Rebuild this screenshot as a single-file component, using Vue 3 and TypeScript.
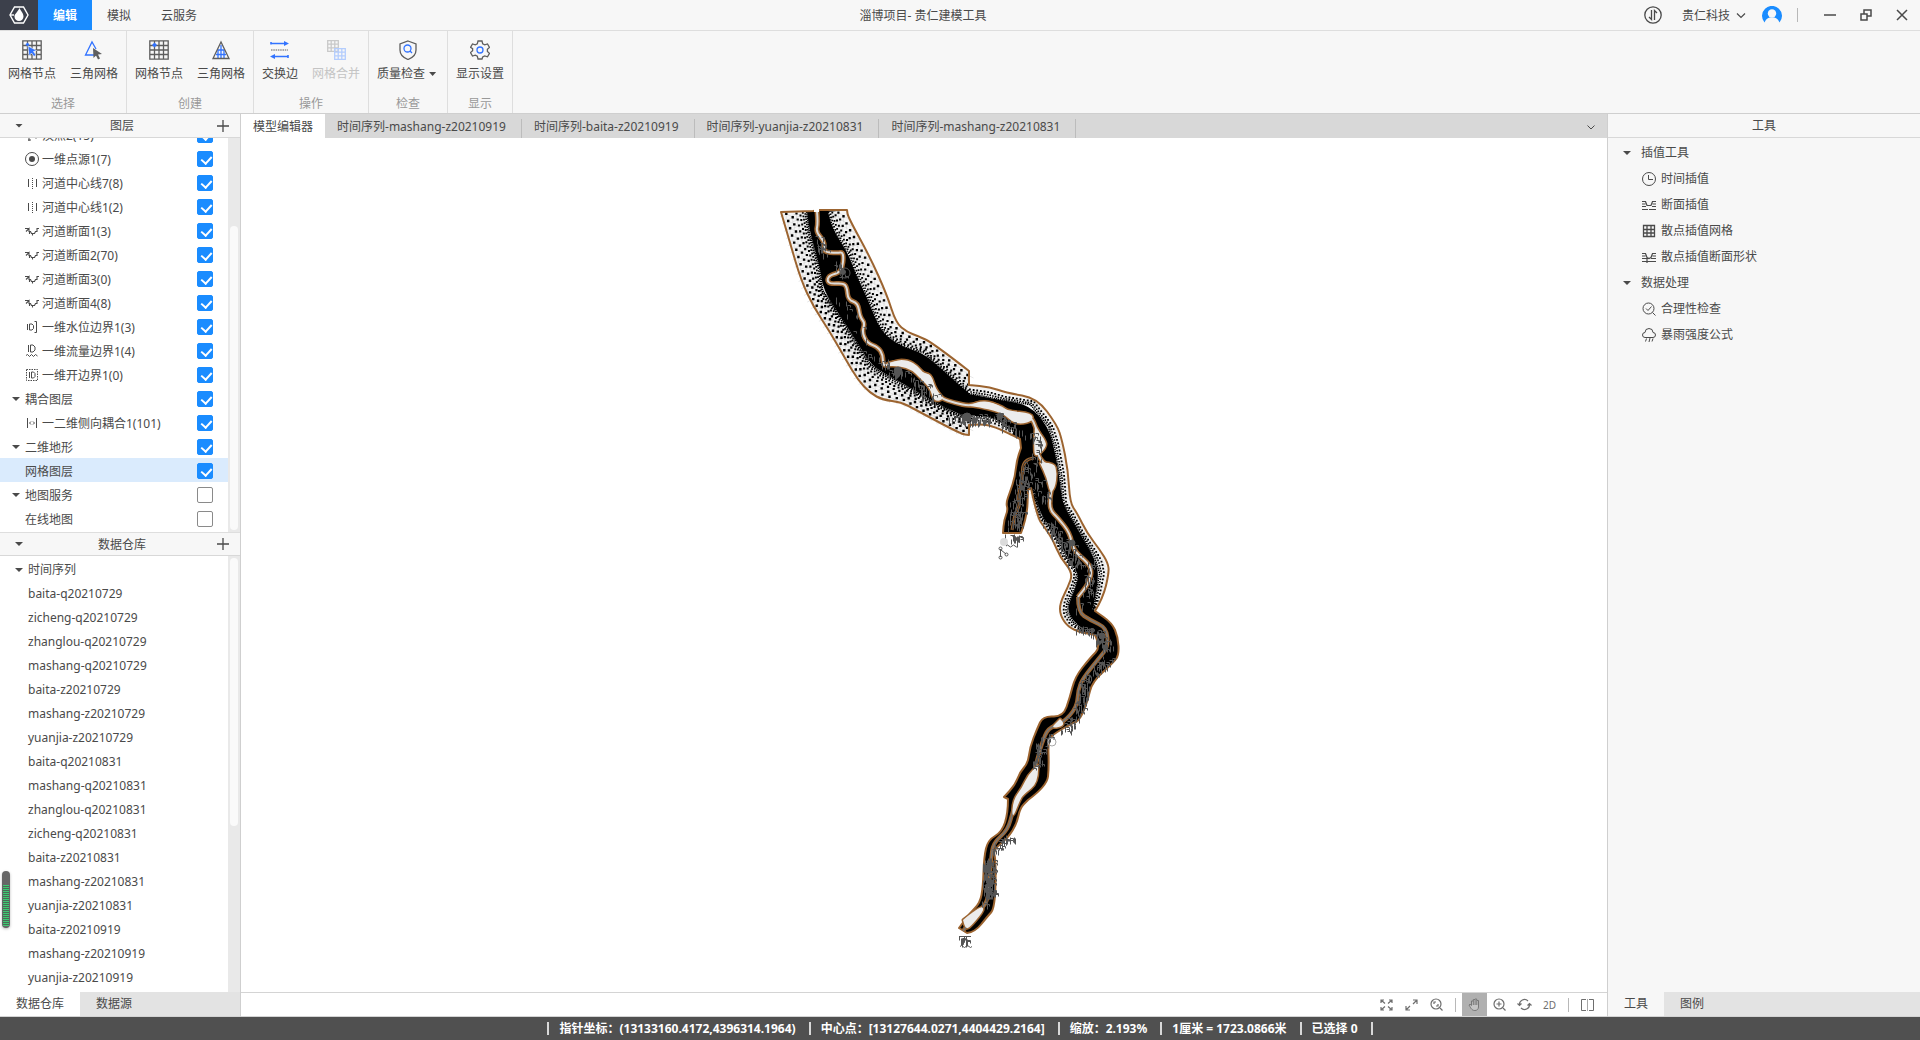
<script setup lang="ts">
import { ref } from 'vue'

type Pt = [number, number]

interface LayerRow {
  name: string
  icon?: string
  group?: boolean
  plain?: boolean
  on: boolean
}

const icons: Record<string, string> = {
  junction: '<path d="M4 1v12M4 7l6 1M3 12h3" /><circle cx="11" cy="8" r="2"/>',
  source: '<circle cx="7" cy="7" r="6.5"/><circle cx="7" cy="7" r="3" fill="currentColor" stroke="none"/>',
  center: '<path d="M3.500 3v8M11.500 3v8"/><path d="M7.500 2v11" stroke-dasharray="1 1"/>',
  section: '<path d="M0 4.500h4M1 7.500l3-3v3h1.500l1 2h3l1-2H12v-3h2M7.500 9.500v2M4.500 8v2" stroke-width="1.100"/>',
  stage: '<path d="M2.500 4v6M4.500 4v6h2.500l1.500-1.500v-3L7 4zM9.500 1.500h2v11h-2"/>',
  flow: '<path d="M3.500 1v7M5.500 1v7H8l2-2V3L8 1z"/><path d="M1 11.500l1.500-1 2 2 2-2 2 2 2-2 2 1.500"/>',
  open: '<rect x="1.500" y="1.500" width="11" height="11" stroke-dasharray="1.500 1"/><path d="M4.500 4v6M6.500 4v6h2l1.500-1.500v-3L8.500 4z"/>',
  couple: '<path d="M2.500 2v10M11.500 2v10M6 5.500L4.500 7 6 8.500M8 5.500L9.500 7 8 8.500"/>',
  clock: '<circle cx="7" cy="7" r="6.500"/><path d="M6.500 3v4.500H11"/>',
  profile: '<path d="M0 3.500h3.500l1.500 4h4l1.500-4H14M0 6h3.500M0 8.500h4M10 8.500h4M10.500 6H14M0 11.500h6M7 11.500h7" stroke-width="1.200"/>',
  grid: '<path d="M1.500 1.500h11v11h-11zM1.500 5.500h11M1.500 9h11M5 1.500v11M9 1.500v11" stroke-width="1.300"/>',
  shape: '<path d="M0 3.500h3.500l1.500 4 2 1 2-1 1.500-4H14M0 6h3.500M0 8.500h5M9 8.500h5M10.500 6H14M0 11.500h14M5 8v5" stroke-width="1.200"/>',
  audit: '<circle cx="6.500" cy="6.500" r="5.500"/><path d="M4 6.500l2 2 3.500-4M10.500 10.500L13.500 13.500"/>',
  rain: '<path d="M3 9.500a2.500 2.500 0 0 1 0-5 4 4 0 0 1 8 0 2.500 2.500 0 0 1 0 5zM4.500 10.500l-1 3M8 10l-1 4M11 10.500l-1 3"/>',
}

const lattice = 'M.8.8h18.400v18.400H.8zM.8 5.500h18.400M.8 10h18.400M.8 14.500h18.400M5.500.8v18.400M10 .8v18.400M14.500.8v18.400'
const ribbonIcons: Record<string, string> = {
  pickNode: `<path d="${lattice}"/><path d="M5.500 2.500l2 2-2 2-2-2z" fill="#3273ff" stroke="none"/><path d="M6 6l8.500 4.500-3 1 2.500 3.500-2 1.500-2.500-3.500L7 16z" fill="#3273ff" stroke="#f7f7f7" stroke-width=".6"/>`,
  pickTri: '<path d="M14 15H1.500L8 2l4 7" stroke="#3273ff"/><path d="M9 8l9 6-4 .5 2 4-2 1-2-4-2.500 2.500z" fill="#5e5e5e" stroke="none"/>',
  addNode: `<path d="${lattice}"/><path d="M5.500 2.500l2.500 2.500-2.500 2.500L3 5z" fill="#3273ff" stroke="none"/>`,
  addTri: '<path d="M10 5v13M7 10v8M13 10v8M7 10h6M5 14.500h10" stroke="#3273ff" stroke-width="1.300"/><path d="M10 2L2 18.500h16z"/>',
  swap: '<path d="M1 3.500h15M3 16.500h15M1 4.500V2M18 15v3" stroke="#3273ff" stroke-width="1.600"/><path d="M14 1l5 2.500L14 6zM5 14l-5 2.500L5 19z" fill="#3273ff" stroke="none"/><path d="M1 10h17" stroke-dasharray="1.500 .8" stroke-width="1.200"/>',
  merge: '<g stroke="#c9c9c9"><path d="M1.700.7h10.600v10.600H1.700zM1.700 4.200h10.600M1.700 7.800h10.600M5.200.7v10.600M8.800.7v10.600"/></g><g stroke="#b4cdfd"><path d="M8.700 8.700h10.600v10.600H8.700zM8.700 12.200h10.600M8.700 15.800h10.600M12.200 8.700v10.600M15.800 8.700v10.600" /></g>',
  quality: '<path d="M10 1l8 3v6c0 5-4 8-8 9.500C6 18 2 15 2 10V4z"/><circle cx="9.500" cy="8.500" r="3.500" stroke="#3273ff"/><path d="M12 11l2 2" stroke="#3273ff"/>',
  settings: '<path d="M8 1h4l.7 2.800 2 1 2.800-.8 2 3.400-2.100 2v2l2.100 2-2 3.400-2.800-.8-2 1L12 19H8l-.7-2.800-2-1-2.800.8-2-3.400 2.100-2v-2L.5 7.400l2-3.400 2.800.8 2-1z"/><circle cx="10" cy="10" r="3" stroke="#3273ff"/>',
}

const ribbon = [
  { title: '选择', tools: [{ label: '网格节点', icon: 'pickNode' }, { label: '三角网格', icon: 'pickTri' }] },
  { title: '创建', tools: [{ label: '网格节点', icon: 'addNode' }, { label: '三角网格', icon: 'addTri' }] },
  { title: '操作', tools: [{ label: '交换边', icon: 'swap' }, { label: '网格合并', icon: 'merge', disabled: true }] },
  { title: '检查', tools: [{ label: '质量检查', icon: 'quality', menu: true }] },
  { title: '显示', tools: [{ label: '显示设置', icon: 'settings' }] },
] as { title: string; tools: { label: string; icon: string; disabled?: boolean; menu?: boolean }[] }[]

const layers = ref<LayerRow[]>([
  { name: '汊点2(15)', icon: 'junction', on: true },
  { name: '一维点源1(7)', icon: 'source', on: true },
  { name: '河道中心线7(8)', icon: 'center', on: true },
  { name: '河道中心线1(2)', icon: 'center', on: true },
  { name: '河道断面1(3)', icon: 'section', on: true },
  { name: '河道断面2(70)', icon: 'section', on: true },
  { name: '河道断面3(0)', icon: 'section', on: true },
  { name: '河道断面4(8)', icon: 'section', on: true },
  { name: '一维水位边界1(3)', icon: 'stage', on: true },
  { name: '一维流量边界1(4)', icon: 'flow', on: true },
  { name: '一维开边界1(0)', icon: 'open', on: true },
  { name: '耦合图层', group: true, on: true },
  { name: '一二维侧向耦合1(101)', icon: 'couple', on: true },
  { name: '二维地形', group: true, on: true },
  { name: '网格图层', plain: true, on: true },
  { name: '地图服务', group: true, on: false },
  { name: '在线地图', plain: true, on: false },
])
const selectedLayer = ref('网格图层')

const series = [
  'baita-q20210729', 'zicheng-q20210729', 'zhanglou-q20210729', 'mashang-q20210729', 'baita-z20210729',
  'mashang-z20210729', 'yuanjia-z20210729', 'baita-q20210831', 'mashang-q20210831', 'zhanglou-q20210831',
  'zicheng-q20210831', 'baita-z20210831', 'mashang-z20210831', 'yuanjia-z20210831', 'baita-z20210919',
  'mashang-z20210919', 'yuanjia-z20210919',
]

const docs = [
  '模型编辑器', '时间序列-mashang-z20210919', '时间序列-baita-z20210919',
  '时间序列-yuanjia-z20210831', '时间序列-mashang-z20210831',
]
const activeDoc = ref(0)

const toolTree = [
  { title: '插值工具', items: [['clock', '时间插值'], ['profile', '断面插值'], ['grid', '散点插值网格'], ['shape', '散点插值断面形状']] },
  { title: '数据处理', items: [['audit', '合理性检查'], ['rain', '暴雨强度公式']] },
]

const status = [
  '指针坐标：(13133160.4172,4396314.1964)',
  '中心点：[13127644.0271,4404429.2164]',
  '缩放：2.193%',
  '1厘米 = 1723.0866米',
  '已选择 0',
]

/* ---- river mesh ---- */
const westBank: Pt[] = [[781, 212], [790, 243], [801, 280], [813, 306], [830, 332], [846, 360], [858, 380], [870, 393], [883, 400], [901, 402], [916, 410], [961, 434], [969, 435]]
const westMid: Pt[] = [[969, 425], [983, 424], [995, 427], [1012, 435], [1020, 439]]
const spur: Pt[] = [[1021, 448], [1017, 458], [1015, 477], [1010, 492], [1006, 503], [1008, 510], [1004, 520], [1003, 533]]
const spurEast: Pt[] = [[1021, 533], [1027, 517], [1028, 490]]
const westLow: Pt[] = [[1031, 488], [1037, 517], [1045, 528], [1053, 540], [1060, 557], [1073, 573], [1068, 587], [1060, 603], [1060, 615], [1068, 627], [1080, 632]]
const westTail: Pt[] = [[1095, 635], [1101, 647], [1090, 658], [1075, 677], [1070, 697], [1063, 717], [1043, 716], [1037, 729], [1030, 747], [1028, 763], [1020, 772], [1015, 785], [1004, 797]]
const westEnd: Pt[] = [[1008, 799], [1008, 813], [1002, 832], [988, 840], [984, 857], [983, 887], [980, 903], [970, 913], [959, 928]]
const eastEnd: Pt[] = [[967, 933], [975, 932], [987, 917], [995, 908], [996, 860], [993, 850], [1008, 838], [1017, 823], [1020, 808], [1028, 800]]
const eastTail: Pt[] = [[1028, 800], [1047, 786], [1049, 767], [1048, 740], [1055, 733], [1073, 723], [1080, 720], [1088, 700], [1092, 682], [1113, 663], [1119, 655], [1118, 637], [1112, 623], [1095, 611]]
const eastMid: Pt[] = [[969, 385], [990, 387], [1007, 393], [1037, 398], [1057, 425], [1062, 440], [1068, 470], [1070, 503], [1077, 513], [1087, 533], [1100, 550], [1108, 563], [1109, 573], [1103, 598], [1095, 611]]
const eastBank: Pt[] = [[847, 210], [848, 217], [870, 257], [887, 295], [896, 323], [907, 332], [918, 336], [933, 343], [969, 371]]

/* Rounds a polyline through the middles of its segments, keeping both ends. */
function curve(pts: Pt[]) {
  let d = `${pts[0][0]} ${pts[0][1]}`
  for (let i = 1; i < pts.length - 1; i++) {
    const mx = (pts[i][0] + pts[i + 1][0]) / 2
    const my = (pts[i][1] + pts[i + 1][1]) / 2
    d += `Q${pts[i][0]} ${pts[i][1]} ${mx} ${my}`
  }
  const end = pts[pts.length - 1]
  return `${d}L${end[0]} ${end[1]}`
}
const flip = (pts: Pt[]) => [...pts].reverse()
const outline =
  'M' +
  [westBank, westMid, spur, spurEast, westLow, westTail, westEnd, eastEnd, eastTail, flip(eastMid), flip(eastBank)]
    .map(curve)
    .join('L') +
  'L820 210L813 211Z'

const bands: { outer: Pt[]; inner: Pt[]; width: number }[] = [
  { outer: westBank, width: 28, inner: [[807, 212], [810, 233], [820, 267], [823, 290], [843, 320], [860, 347], [870, 363], [883, 373], [910, 387], [930, 400], [957, 413], [969, 418]] },
  { outer: eastBank, width: 22, inner: [[828, 212], [833, 230], [848, 253], [855, 273], [867, 297], [877, 323], [887, 337], [903, 347], [923, 353], [943, 370], [957, 383], [969, 393]] },
  { outer: eastMid, width: 9, inner: [[969, 394], [1000, 400], [1030, 405], [1048, 427], [1054, 447], [1060, 480], [1062, 503], [1078, 530], [1094, 557], [1099, 573], [1095, 598], [1093, 609]] },
  { outer: westLow, width: 8, inner: [[1032, 488], [1041, 515], [1050, 527], [1059, 540], [1066, 555], [1079, 573], [1076, 587], [1069, 603], [1068, 612], [1074, 622], [1082, 628]] },
  { outer: westMid.slice(0, 4), width: 8, inner: [[969, 416], [985, 416], [998, 420], [1014, 430]] },
]

function length(pts: Pt[]) {
  let sum = 0
  for (let i = 1; i < pts.length; i++) sum += Math.hypot(pts[i][0] - pts[i - 1][0], pts[i][1] - pts[i - 1][1])
  return sum
}
function along(pts: Pt[], f: number): Pt {
  let left = f * length(pts)
  for (let i = 1; i < pts.length; i++) {
    const [ax, ay] = pts[i - 1]
    const [bx, by] = pts[i]
    const d = Math.hypot(bx - ax, by - ay)
    if (left <= d) return [ax + ((bx - ax) * left) / d, ay + ((by - ay) * left) / d]
    left -= d
  }
  return pts[pts.length - 1]
}
const n1 = (v: number) => Math.round(v * 10) / 10

const zones: string[] = []
let mesh = ''
let dots = ''
for (const b of bands) {
  zones.push(`M${curve(b.outer)}L${curve(flip(b.inner))}Z`)
  const total = length(b.outer)
  let d = 0.5
  let step = 1.8
  let row = 0
  while (d < b.width - 2) {
    const count = Math.floor(total / (step * 1.25))
    const size = Math.min(1.4 + row * 0.2, 2.4)
    for (let i = 0; i < count; i++) {
      const f = (i + (row % 2 ? 0.75 : 0.25)) / count
      const p = along(b.inner, f)
      const q = along(b.outer, f)
      const t = d / b.width
      const x = p[0] + (q[0] - p[0]) * t
      const y = p[1] + (q[1] - p[1]) * t
      dots += `M${n1(x - size / 2)} ${n1(y - size / 2)}h${n1(size)}v${n1(size)}h-${n1(size)}z`
      if (step > 3) mesh += `M${n1(x)} ${n1(y)}l${n1(step)} ${n1(step / 2)}M${n1(x)} ${n1(y)}l-${n1(step)} ${n1(step / 2)}M${n1(x)} ${n1(y)}v${n1(step)}`
    }
    d += step
    step = Math.min(step * 1.3, 6)
    row++
  }
}

const channel: Pt[] = [[817, 211], [818, 223], [816, 232], [825, 242], [823, 252], [837, 253], [844, 252], [842, 272], [830, 275], [827, 280], [830, 284], [843, 283], [847, 287], [848, 300], [858, 303], [860, 317], [865, 323], [862, 332], [867, 343], [878, 347], [883, 355], [883, 367], [892, 362], [910, 362], [920, 373], [930, 375], [933, 387], [940, 398], [955, 403], [970, 406], [983, 402], [1003, 407], [1013, 418], [1032, 417], [1035, 427], [1043, 440], [1037, 453], [1043, 463], [1052, 467], [1053, 483], [1050, 497], [1050, 510], [1058, 518], [1070, 533], [1073, 550], [1087, 562], [1092, 570], [1089, 583], [1078, 597], [1078, 612], [1090, 620], [1107, 628], [1108, 647], [1100, 657], [1083, 678], [1078, 690], [1077, 707], [1063, 723], [1048, 728], [1042, 743], [1037, 760], [1033, 777], [1020, 790], [1013, 810], [1008, 830], [993, 843], [991, 860], [989, 887], [987, 903], [977, 913], [963, 931]]
const narrowFrom = channel.findIndex((p) => p[0] === 1078 && p[1] === 597)
const upperChannel = 'M' + curve(channel.slice(0, narrowFrom + 1))
const lowerChannel = 'M' + curve(channel.slice(narrowFrom))
const spurChannel = 'M' + curve([[1034, 458], [1023, 459], [1022, 480], [1018, 497], [1020, 506], [1015, 513], [1012, 530]])
const poolPoints: Pt[][] = [
  [[885, 366], [895, 360], [908, 360], [918, 366], [924, 374], [931, 374], [936, 390], [945, 399], [934, 402], [930, 388], [920, 378], [912, 370], [900, 366], [885, 366]],
  [[970, 406], [977, 401], [993, 402], [1007, 411], [1032, 413], [1033, 421], [1021, 424], [1012, 422], [1003, 413], [983, 408], [970, 406]],
  [[1035, 427], [1046, 440], [1046, 448], [1035, 458], [1034, 446], [1035, 427]],
  [[1040, 463], [1054, 462], [1057, 473], [1055, 488], [1050, 493], [1047, 478], [1040, 463]],
  [[1038, 765], [1039, 782], [1023, 795], [1020, 800], [1012, 820], [1013, 800], [1022, 788], [1028, 775], [1038, 765]],
  [[1060, 719], [1067, 725], [1050, 729], [1060, 719]],
  [[963, 920], [980, 906], [985, 909], [973, 924], [966, 930], [963, 920]],
]
const pools = poolPoints.map((p) => `M${curve(p)}Z`)

/* section and coupling markers, scattered along the reaches that carry them */
let seed = 7
const rand = () => ((seed = (seed * 16807) % 2147483647) / 2147483647)
const clusters: { path: Pt[]; count: number; spread: number }[] = [
  { path: [[817, 238], [824, 252]], count: 24, spread: 5 },
  { path: [[835, 262], [845, 276]], count: 12, spread: 5 },
  { path: [[838, 296], [855, 318], [860, 338]], count: 14, spread: 6 },
  { path: [[870, 352], [884, 364]], count: 14, spread: 7 },
  { path: [[893, 370], [915, 378], [932, 400]], count: 60, spread: 8 },
  { path: [[955, 416], [970, 418], [1000, 416], [1018, 430]], count: 100, spread: 7 },
  { path: [[1018, 432], [1036, 436], [1036, 458]], count: 30, spread: 6 },
  { path: [[1030, 462], [1022, 480], [1017, 505], [1014, 526]], count: 130, spread: 7 },
  { path: [[1008, 534], [1018, 538]], count: 26, spread: 5 },
  { path: [[1038, 478], [1045, 500]], count: 25, spread: 6 },
  { path: [[1048, 522], [1064, 540], [1078, 565]], count: 90, spread: 7 },
  { path: [[1090, 560], [1088, 592], [1076, 612]], count: 40, spread: 5 },
  { path: [[1080, 628], [1098, 632], [1108, 648]], count: 70, spread: 6 },
  { path: [[1108, 658], [1086, 680], [1078, 710], [1064, 730]], count: 130, spread: 6 },
  { path: [[1050, 732], [1040, 745], [1037, 768]], count: 50, spread: 5 },
  { path: [[1012, 834], [994, 850]], count: 34, spread: 5 },
  { path: [[989, 860], [989, 896]], count: 180, spread: 6 },
  { path: [[984, 902], [988, 904]], count: 8, spread: 3 },
  { path: [[962, 937], [967, 941]], count: 18, spread: 4 },
]
let ticks = ''
for (const c of clusters) {
  for (let i = 0; i < c.count; i++) {
    const p = along(c.path, rand())
    const x = Math.round(p[0] + (rand() - 0.5) * 2 * c.spread) + 0.5
    const y = Math.round(p[1] + (rand() - 0.5) * c.spread) + 0.5
    ticks += rand() > 0.35 ? `M${x} ${y}v${Math.round(3 + rand() * 4)}` : `M${x} ${y}h3v2`
  }
}
</script>

<template>
  <div class="app">
    <header class="titlebar">
      <div class="logo">
        <svg width="20" height="18" viewBox="0 0 20 18" fill="none" stroke="#fff" stroke-width="1.4">
          <path d="M5.500 1h9L19 9l-4.500 8h-9L1 9z" />
          <path d="M1 9h4" />
          <path d="M10.500 2c1 3 4 5 4 8.500a4.500 4.500 0 0 1-9 0C5.500 8 8 7 10.500 2z" fill="#fff" stroke="none" />
        </svg>
      </div>
      <nav class="menu">
        <button class="on">编辑</button>
        <button>模拟</button>
        <button>云服务</button>
      </nav>
      <h1>淄博项目- 贵仁建模工具</h1>
      <div class="account">
        <button class="sync" aria-label="同步">
          <svg width="18" height="18" viewBox="0 0 18 18" fill="none" stroke="currentColor" stroke-width="1.3">
            <circle cx="9" cy="9" r="8.200" /><path d="M7.500 4v9.500L5 11M10.500 14V4.500L13 7" />
          </svg>
        </button>
        <button class="company">
          贵仁科技
          <svg width="10" height="6" viewBox="0 0 10 6" fill="none" stroke="currentColor" stroke-width="1.2"><path d="M1 .5l4 4 4-4" /></svg>
        </button>
        <svg class="avatar" width="20" height="18" viewBox="0 0 20 18">
          <path d="M2.500 16.500A10 10 0 1 1 17.500 16.500Q16 12.500 12.500 11.500h-5Q4 12.500 2.500 16.500z" fill="#1a8cff" />
          <circle cx="10" cy="7.500" r="4.200" fill="#f7f7f7" />
        </svg>
        <i class="rule"></i>
        <button class="win" aria-label="最小化"><svg width="12" height="12" viewBox="0 0 12 12" stroke="currentColor" stroke-width="1.500"><path d="M0 6h12" /></svg></button>
        <button class="win" aria-label="还原"><svg width="12" height="12" viewBox="0 0 12 12" fill="none" stroke="currentColor" stroke-width="1.500"><path d="M1 5h6v6H1zM4 5V1h7v6H7" /></svg></button>
        <button class="win" aria-label="关闭"><svg width="12" height="12" viewBox="0 0 12 12" stroke="currentColor" stroke-width="1.500"><path d="M1 1l10 10M11 1L1 11" /></svg></button>
      </div>
    </header>

    <section class="ribbon">
      <div v-for="g in ribbon" :key="g.title" class="group">
        <div class="tools">
          <button v-for="t in g.tools" :key="t.icon" :disabled="t.disabled">
            <svg width="20" height="20" viewBox="0 0 20 20" fill="none" stroke="#5e5e5e" stroke-width="1.3" v-html="ribbonIcons[t.icon]"></svg>
            <span>{{ t.label }}<i v-if="t.menu" class="caret"></i></span>
          </button>
        </div>
        <div class="caption">{{ g.title }}</div>
      </div>
    </section>

    <main class="work">
      <aside class="left">
        <div class="head"><i class="caret"></i><span>图层</span><button aria-label="添加图层">
          <svg width="12" height="12" viewBox="0 0 12 12" stroke="currentColor" stroke-width="1.3"><path d="M0 6h12M6 0v12" /></svg></button></div>
        <div class="pane layers">
          <ul>
            <li v-for="(l, i) in layers" :key="i" :class="{ group: l.group, plain: l.plain, sel: l.name === selectedLayer }" @click="selectedLayer = l.name">
              <i v-if="l.group" class="caret"></i>
              <svg v-if="l.icon" width="14" height="14" viewBox="0 0 14 14" fill="none" stroke="currentColor" v-html="icons[l.icon]"></svg>
              <label :for="'layer' + i">{{ l.name }}</label>
              <input :id="'layer' + i" v-model="l.on" type="checkbox" />
            </li>
          </ul>
          <div class="bar"><div class="thumb low"></div></div>
        </div>
        <div class="head mid"><i class="caret"></i><span>数据仓库</span><button aria-label="添加数据">
          <svg width="12" height="12" viewBox="0 0 12 12" stroke="currentColor" stroke-width="1.3"><path d="M0 6h12M6 0v12" /></svg></button></div>
        <div class="pane store">
          <ul>
            <li class="root"><i class="caret"></i><span>时间序列</span></li>
            <li v-for="s in series" :key="s">{{ s }}</li>
          </ul>
          <div class="bar"><div class="thumb high"></div></div>
        </div>
        <div class="tabs"><button class="on">数据仓库</button><button>数据源</button></div>
        <div class="meter"><i></i></div>
      </aside>

      <section class="center">
        <div class="docs">
          <button v-for="(d, i) in docs" :key="d" :class="{ on: activeDoc === i }" @click="activeDoc = i">{{ d }}</button>
          <svg width="8" height="5" viewBox="0 0 8 5" fill="none" stroke="currentColor"><path d="M.5.500L4 4 7.500.500" /></svg>
        </div>
        <div class="canvas">
          <svg viewBox="241 138 1366 854">
            <path :d="outline" fill="#000" />
            <path v-for="(z, i) in zones" :key="i" :d="z" fill="#f4f4f4" />
            <path :d="mesh" fill="none" stroke="#cfcfcf" stroke-width=".5" />
            <path :d="dots" fill="#000" />
            <path :d="outline" fill="none" stroke="#9c6430" stroke-width="2" stroke-linejoin="round" />
            <g fill="none" stroke="#9c6430" stroke-linejoin="round">
              <path :d="upperChannel" stroke-width="5" />
              <path :d="lowerChannel" stroke-width="4" />
              <path :d="spurChannel" stroke-width="3" />
              <path v-for="(p, i) in pools" :key="i" :d="p" stroke-width="3" />
            </g>
            <g fill="#ececec" stroke="#dcdcdc" stroke-linejoin="round">
              <path :d="upperChannel" fill="none" stroke-width="2" />
              <path :d="lowerChannel" fill="none" stroke="#777" stroke-width="1.5" />
              <path :d="spurChannel" fill="none" stroke="#333" stroke-width="1" />
              <path v-for="(p, i) in pools" :key="i" :d="p" stroke="none" />
            </g>
            <path d="M814 208h5v4h-5z" fill="#fff" />
            <path :d="ticks" fill="none" stroke="#555" />
            <g fill="none" stroke="#555">
              <circle cx="845" cy="273" r="5" />
              <circle cx="843" cy="272" r="2.500" fill="#555" />
              <circle cx="898" cy="371" r="4" fill="#555" />
              <circle cx="967" cy="417" r="4" fill="#555" />
              <circle cx="1000" cy="416" r="3" fill="#555" />
              <circle cx="1072" cy="543" r="3" fill="#555" />
              <circle cx="1102" cy="636" r="3" fill="#555" />
              <circle cx="1052" cy="742" r="4" stroke="#aaa" />
              <circle cx="1004" cy="542" r="4" fill="#ccc" stroke="none" opacity=".7" />
              <path d="M1006 546q1.500-2 3 0t3 0 3 0 3 0" />
              <path d="M1000.500 549v8M1001 550l5 4" />
              <circle cx="1000.500" cy="548.500" r="1.500" /><circle cx="1000.500" cy="557.500" r="1.500" /><circle cx="1006.500" cy="554.500" r="1.500" />
              <path d="M960 946.500q1.500-2 3 0t3 0 3 0 3 0M959 936.500h12" />
            </g>
          </svg>
        </div>
        <div class="viewbar">
          <button aria-label="全图"><svg width="13" height="12" viewBox="0 0 13 12" fill="none" stroke="currentColor" stroke-width="1.200"><path d="M1 4V1h3M9 1h3v3M12 8v3H9M4 11H1V8M1 1l4 3.500M12 1L8 4.500M1 11l4-3.500M12 11L8 7.500" /></svg></button>
          <button aria-label="缩放至选择"><svg width="13" height="12" viewBox="0 0 13 12" fill="none" stroke="currentColor" stroke-width="1.200"><path d="M8 1h4v4M12 1L8 5M5 11H1V7M1 11l4-4" /></svg></button>
          <button aria-label="框选放大"><svg width="13" height="13" viewBox="0 0 13 13" fill="none" stroke="currentColor" stroke-width="1.200"><circle cx="6" cy="6" r="5" /><path d="M4 6V4h2M8 6v2H6M10 10l2.500 2.500" /></svg></button>
          <i class="rule"></i>
          <button class="on" aria-label="平移"><svg width="13" height="13" viewBox="0 0 13 13" fill="#c4c4c4" stroke="#777"><path d="M3.500 7.500V3h1.800V1.500h1.800V1h1.600v1.500h1.800V9c0 2-1.500 3.500-3.500 3.500-2.500 0-3.500-1-6-5.500l1-.8zM5.300 3v4M7.100 2v5M8.800 2.500V7" /></svg></button>
          <button aria-label="放大"><svg width="13" height="13" viewBox="0 0 13 13" fill="none" stroke="currentColor" stroke-width="1.200"><circle cx="6" cy="6" r="5" /><path d="M6 3.500v5M3.500 6h5M10 10l2.500 2.500" /></svg></button>
          <button aria-label="刷新"><svg width="15" height="13" viewBox="0 0 15 13" fill="none" stroke="currentColor" stroke-width="1.200"><path d="M2.500 7A5 5 0 0 1 11 3M12.500 6A5 5 0 0 1 4 10M.5 5.500l2 2 2-2M10.500 7.500l2-2 2 2" /></svg></button>
          <button class="dim">2D</button>
          <i class="rule"></i>
          <button aria-label="分屏"><svg width="13" height="12" viewBox="0 0 13 12" fill="none" stroke="currentColor"><path d="M5 .5H.5v11H5M8 .5h4.500v11H8" /><path d="M6.500 0v12" stroke="#aaa" /></svg></button>
        </div>
      </section>

      <aside class="right">
        <div class="head"><span>工具</span></div>
        <div class="tree">
          <template v-for="g in toolTree" :key="g.title">
            <div class="node"><i class="caret"></i>{{ g.title }}</div>
            <button v-for="t in g.items" :key="t[1]" class="leaf">
              <svg width="14" height="14" viewBox="0 0 14 14" fill="none" stroke="currentColor" v-html="icons[t[0]]"></svg>{{ t[1] }}
            </button>
          </template>
        </div>
        <div class="tabs"><button class="on">工具</button><button>图例</button></div>
      </aside>
    </main>

    <footer class="status">
      <template v-for="s in status" :key="s"><i></i><span>{{ s }}</span></template><i></i>
    </footer>
  </div>
</template>

<style>
body {
  margin: 0;
}
</style>

<style scoped>
.app {
  display: flex;
  flex-direction: column;
  height: 100vh;
  background: #fff;
  color: #4a4a4a;
  font: 12px/24px "Noto Sans", "Noto Sans CJK SC", sans-serif;
}
.app * {
  box-sizing: border-box;
}
button {
  padding: 0;
  border: 0;
  background: none;
  color: inherit;
  font: inherit;
}
svg {
  display: block;
  flex: none;
}
ul {
  margin: 0;
  padding: 0;
  list-style: none;
}
.caret {
  flex: none;
  width: 8px;
  height: 4px;
  background: currentColor;
  clip-path: polygon(0 0, 100% 0, 50% 100%);
}
.rule {
  width: 1px;
  height: 14px;
  background: #b8b8b8;
}

.titlebar {
  display: flex;
  flex: none;
  height: 31px;
  border-bottom: 1px solid #dedede;
  background: #f7f7f7;
}
.logo {
  display: flex;
  align-items: center;
  justify-content: center;
  width: 38px;
  background: #3c404b;
}
.menu {
  display: flex;
}
.menu button {
  padding: 2px 15px 0;
}
.menu .on {
  background: #1a8cff;
  color: #fff;
  font-weight: 700;
}
h1 {
  flex: 1;
  margin: 0;
  padding: 1px 0 0 2px;
  font-size: 12px;
  font-weight: 400;
  line-height: 30px;
  text-align: center;
}
.account {
  display: flex;
  align-items: center;
  padding: 0 12px;
}
.company {
  display: flex;
  align-items: center;
  gap: 6px;
  margin: 0 16px 0 20px;
  padding-top: 2px;
}
.account .rule {
  margin: 0 26px 0 15px;
}
.win + .win {
  margin-left: 24px;
}

.ribbon {
  display: flex;
  flex: none;
  height: 83px;
  border-bottom: 1px solid #cfcfcf;
  background: #f7f7f7;
}
.group {
  display: flex;
  flex-direction: column;
}
.ribbon .group {
  padding: 9px 8px 0;
  border-right: 1px solid #dedede;
}
.tools {
  display: flex;
  gap: 14px;
}
.tools button {
  display: flex;
  flex-direction: column;
  align-items: center;
  gap: 2px;
}
.tools span {
  display: flex;
  align-items: center;
  gap: 4px;
}
.tools button:disabled {
  color: #c4c4c4;
}
.tools .caret {
  width: 7px;
  margin-right: 3px;
}
.caption {
  margin-top: 6px;
  color: #999;
  text-align: center;
}

.work {
  display: flex;
  flex: 1;
  min-height: 0;
}
.head {
  display: flex;
  flex: none;
  align-items: center;
  height: 24px;
  border-bottom: 1px solid #d8d8d8;
  background: #f7f7f7;
}
.head span {
  flex: 1;
  text-align: center;
}
.left {
  position: relative;
  display: flex;
  flex: none;
  flex-direction: column;
  width: 241px;
  border-right: 1px solid #cfcfcf;
}
.left .head {
  padding: 0 11px 0 15px;
}
.left .head span {
  padding: 1px 0 0 4px;
}
.left .mid {
  border-top: 1px solid #dedede;
}
.pane {
  display: flex;
  overflow: hidden;
}
.layers {
  flex: 394 1 0;
}
.store {
  flex: 436 1 0;
}
.pane ul {
  flex: 1;
}
.layers ul {
  margin-top: -16px;
}
.pane li {
  display: flex;
  align-items: center;
  height: 24px;
}
.layers li {
  padding: 2px 15px 0 25px;
}
.layers .group {
  flex-direction: row;
  padding-left: 12px;
}
.layers .group .caret {
  margin-right: 5px;
}
.layers svg {
  margin-right: 3px;
}
.sel {
  background: #daebfd;
}
.layers label {
  flex: 1;
  padding-top: 2px;
}
input {
  position: relative;
  width: 16px;
  height: 16px;
  margin: 0;
  border: 1px solid #8a8a8a;
  border-radius: 2px;
  background: #fff;
  appearance: none;
}
input:checked {
  border-color: #1a8cff;
  background: #1a8cff;
}
input:checked::after {
  position: absolute;
  top: 2px;
  left: 5px;
  width: 5px;
  height: 8px;
  border: solid #fff;
  border-width: 0 2px 2px 0;
  content: "";
  transform: rotate(42deg);
}
.store ul {
  padding-top: 2px;
}
.store li {
  padding-left: 28px;
}
.store .root {
  gap: 5px;
  padding-left: 15px;
}
.bar {
  display: flex;
  flex: none;
  flex-direction: column;
  width: 12px;
  padding: 2px;
  background: #e9e9e9;
}
.thumb {
  border-radius: 4px;
  background: #fafafa;
}
.low {
  height: 78%;
  margin-top: auto;
}
.high {
  height: 62%;
}
.tabs {
  display: flex;
  flex: none;
  height: 25px;
  border-bottom: 1px solid #d4d4d4;
  background: #e3e3e3;
}
.tabs button {
  padding: 0 16px;
}
.left .tabs .on {
  background: #fff;
}
.right .tabs .on {
  background: #f7f7f7;
}
.meter {
  position: absolute;
  bottom: 89px;
  left: 2px;
  width: 8px;
  height: 57px;
  padding: 14px 1px 2px;
  border-radius: 4px;
  background: #666;
  box-shadow: 0 1px 3px #bbb;
}
.meter i {
  display: block;
  height: 100%;
  background: repeating-linear-gradient(#3fc973 0 1px, #4a6a55 1px 2px);
}

.center {
  display: flex;
  flex: 1;
  flex-direction: column;
  min-width: 0;
}
.docs {
  display: flex;
  flex: none;
  align-items: center;
  height: 24px;
  background: #d8d8d8;
}
.docs button {
  position: relative;
  height: 24px;
  padding: 1px 16px 0 12px;
}
.docs button:not(.on)::after {
  position: absolute;
  right: 0;
  bottom: 0;
  width: 1px;
  height: 19px;
  background: #bcbcbc;
  content: "";
}
.docs .on {
  padding-right: 12px;
  background: #fff;
}
.docs svg {
  margin: 2px 12px 0 auto;
}
.canvas {
  flex: 1;
  min-height: 0;
}
.canvas svg {
  width: 100%;
  height: 100%;
}
.viewbar {
  display: flex;
  flex: none;
  align-items: center;
  justify-content: flex-end;
  height: 25px;
  padding-right: 7px;
  border-top: 1px solid #d4d4d4;
  border-bottom: 1px solid #d4d4d4;
  color: #6e6e6e;
}
.viewbar button {
  display: flex;
  align-items: center;
  justify-content: center;
  width: 25px;
  height: 23px;
}
.viewbar .rule {
  margin: 0 6px;
}
.viewbar .on {
  background: #b0b0b0;
}
.viewbar .dim {
  font-size: 10px;
}

.right {
  display: flex;
  flex: none;
  flex-direction: column;
  width: 313px;
  border-left: 1px solid #cfcfcf;
  background: #f7f7f7;
}
.tree {
  display: flex;
  flex: 1;
  flex-direction: column;
  padding-top: 2px;
}
.node,
.leaf {
  display: flex;
  align-items: center;
  height: 26px;
}
.node {
  gap: 10px;
  padding-left: 15px;
}
.leaf {
  gap: 5px;
  padding-left: 34px;
}

.status {
  display: flex;
  flex: none;
  align-items: center;
  justify-content: center;
  gap: 10px;
  height: 23px;
  background: #505050;
  color: #fff;
  font-weight: 700;
  white-space: pre;
}
.status span {
  padding-right: 3px;
}
.status i {
  width: 2px;
  height: 13px;
  background: #d8d8d8;
}
</style>
